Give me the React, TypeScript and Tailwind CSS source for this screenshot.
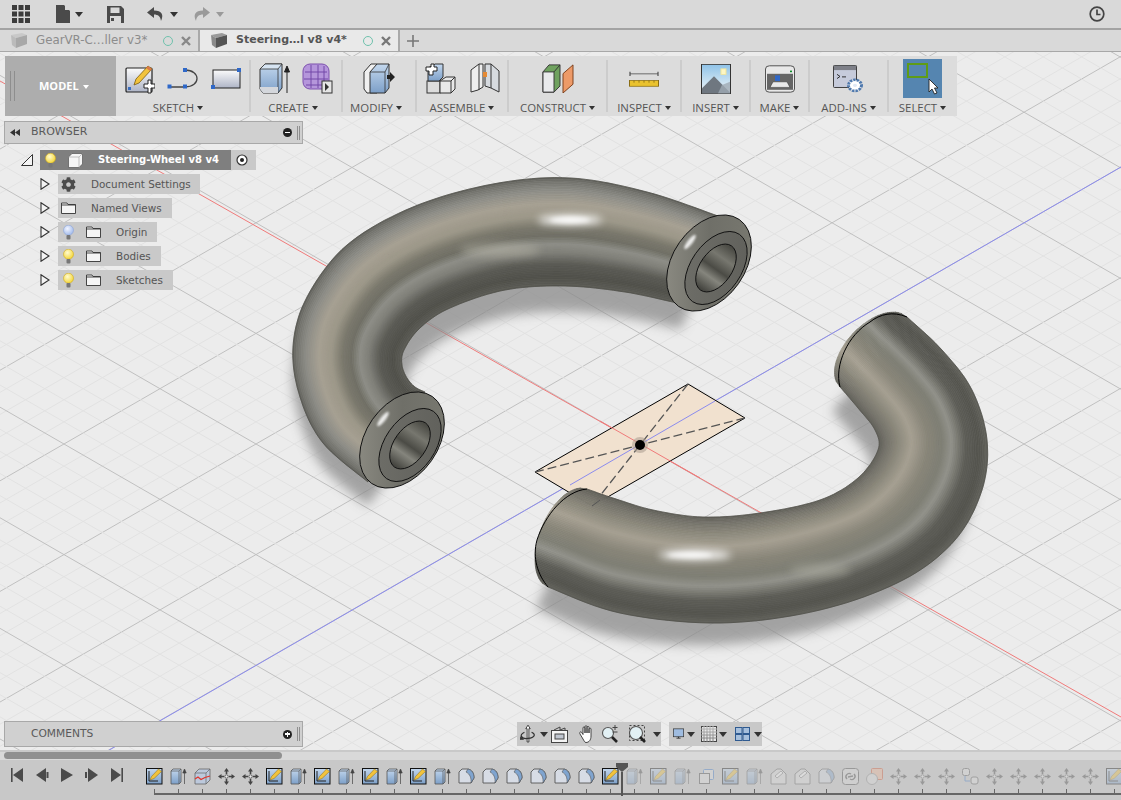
import React from 'react'
import { FaCog } from 'react-icons/fa'

type Pt = [number, number]

const ui = { fontFamily: '"Open Sans", "Noto Sans", sans-serif' }
const tree = { fontFamily: '"DejaVu Sans", "Open Sans", sans-serif' }

// viewport geometry: tube outlines traced from the picture
const smooth = (p: Pt[], n = 10): Pt[] => {
  const out: Pt[] = []
  for (let i = 0; i < p.length - 1; i++) {
    const a = p[Math.max(i - 1, 0)]
    const b = p[i]
    const c = p[i + 1]
    const d = p[Math.min(i + 2, p.length - 1)]
    for (let k = 0; k < n; k++) {
      const t = k / n
      const f = (j: 0 | 1) =>
        0.5 *
        (2 * b[j] +
          (c[j] - a[j]) * t +
          (2 * a[j] - 5 * b[j] + 4 * c[j] - d[j]) * t * t +
          (3 * b[j] - a[j] - 3 * c[j] + d[j]) * t * t * t)
      out.push([f(0), f(1)])
    }
  }
  out.push(p[p.length - 1])
  return out
}

const mix = (stops: number[][], t: number) => {
  let i = 0
  while (i < stops.length - 2 && t > stops[i + 1][0]) i++
  const a = stops[i]
  const b = stops[i + 1]
  const u = Math.min(1, Math.max(0, (t - a[0]) / (b[0] - a[0])))
  const c = [1, 2, 3].map((j) => Math.round(a[j] + (b[j] - a[j]) * u))
  return `rgb(${c[0]},${c[1]},${c[2]})`
}

const rowAt = (o: Pt[], i: Pt[], t: number, b0: Pt, b1: Pt): Pt[] =>
  o.map((p, k) => {
    const q = i[k]
    const e = 2 * Math.sqrt(Math.max(t * (1 - t), 0))
    const bx = k === 0 ? b0[0] * e : k === o.length - 1 ? b1[0] * e : 0
    const by = k === 0 ? b0[1] * e : k === o.length - 1 ? b1[1] * e : 0
    return [p[0] + (q[0] - p[0]) * t + bx, p[1] + (q[1] - p[1]) * t + by]
  })

const toPath = (p: Pt[]) => p.map((q) => q[0].toFixed(1) + ' ' + q[1].toFixed(1)).join(' L')

const Tube = ({ id, outer, inner, stops, b0 = [0, 0], b1 = [0, 0], children }: { id: string; outer: Pt[]; inner: Pt[]; stops: number[][]; b0?: Pt; b1?: Pt; children?: React.ReactNode }) => {
  const o = smooth(outer)
  const i = smooth(inner)
  const K = 64
  const strips = []
  for (let j = 0; j < K; j++) {
    const a = rowAt(o, i, j / K, b0, b1)
    const b = rowAt(o, i, (j + 1) / K, b0, b1)
    const c = mix(stops, (j + 0.5) / K)
    strips.push(<path key={j} d={'M' + toPath(a) + ' L' + toPath([...b].reverse()) + 'Z'} fill={c} stroke={c} strokeWidth="0.7" />)
  }
  const ends = (k: number) => {
    const pts: Pt[] = []
    for (let j = 0; j <= 24; j++) pts.push(rowAt(o, i, j / 24, b0, b1)[k])
    return pts
  }
  const sil = 'M' + toPath(ends(0)) + ' L' + toPath(rowAt(o, i, 1, b0, b1)) + ' L' + toPath([...ends(o.length - 1)].reverse()) + ' L' + toPath([...rowAt(o, i, 0, b0, b1)].reverse()) + 'Z'
  return (
    <g>
      <clipPath id={id}>
        <path d={sil} />
      </clipPath>
      {strips}
      <g clipPath={`url(#${id})`}>{children}</g>
      <path d={'M' + toPath(rowAt(o, i, 0, b0, b1))} fill="none" stroke="#3b3b36" strokeWidth="0.7" strokeOpacity="0.6" />
      <path d={'M' + toPath(rowAt(o, i, 1, b0, b1))} fill="none" stroke="#3b3b36" strokeWidth="0.7" strokeOpacity="0.5" />
    </g>
  )
}

const upperOuter: Pt[] = [[718, 216], [647, 192], [570, 178], [493, 184], [413, 207], [347, 245], [307, 297], [293, 347], [300, 397], [323, 443], [368, 482]]
const upperInner: Pt[] = [[677, 303], [625, 292], [565, 286], [505, 290], [450, 308], [420, 328], [404, 350], [402, 365], [407, 378], [415, 387], [425, 392]]
const lowerOuter: Pt[] = [[548, 587], [620, 613], [720, 623], [820, 610], [903, 580], [955, 540], [982, 490], [987, 440], [972, 390], [942, 350], [907, 317]]
const lowerInner: Pt[] = [[587, 489], [613, 498], [653, 510], [703, 517], [760, 513], [820, 500], [858, 478], [878, 450], [875, 430], [858, 408], [840, 387]]

const upperStops = [
  [0, 96, 96, 91], [0.04, 116, 116, 110], [0.12, 140, 140, 134], [0.24, 166, 160, 146], [0.36, 156, 151, 136], [0.46, 122, 120, 108],
  [0.54, 112, 111, 101], [0.62, 142, 142, 135], [0.7, 126, 126, 119], [0.8, 90, 90, 84], [0.92, 80, 80, 74], [1, 92, 92, 86],
]
const lowerStops = [
  [0, 98, 98, 92], [0.08, 84, 84, 78], [0.2, 92, 92, 86], [0.33, 146, 146, 138], [0.42, 126, 126, 116], [0.55, 136, 133, 120],
  [0.7, 166, 160, 146], [0.82, 140, 137, 124], [0.94, 116, 114, 105], [1, 98, 97, 90],
]

const Cap = ({ cx, cy, mx, my }: { cx: number; cy: number; mx: number; my: number }) => (
  <g>
    <ellipse cx={cx} cy={cy} rx="53" ry="36" transform={`rotate(-55 ${cx} ${cy})`} fill="url(#capOuter)" stroke="#111" strokeWidth="0.9" />
    <ellipse cx={cx - 19} cy={cy - 21} rx="2.5" ry="9" transform={`rotate(38 ${cx - 19} ${cy - 21})`} fill="#fff" opacity="0.85" filter="url(#blur1)" />
    <ellipse cx={mx} cy={my} rx="41" ry="25" transform={`rotate(-55 ${mx} ${my})`} fill="url(#capRing)" stroke="#111" strokeWidth="0.9" />
    <ellipse cx={mx} cy={my} rx="27" ry="16" transform={`rotate(-55 ${mx} ${my})`} fill="url(#capHole)" stroke="#111" strokeWidth="0.9" />
  </g>
)

const gridLines = () => {
  const lines = []
  const k = 0.576
  for (const dir of [-1, 1]) {
    for (let n = -70; n <= 70; n++) {
      const major = Math.abs(n) % 5 === 0
      const y0 = 444 + dir * k * (0 - 640) + n * 22.12
      const y1 = 444 + dir * k * (1121 - 640) + n * 22.12
      lines.push(<line key={dir + '_' + n} x1="0" y1={y0} x2="1121" y2={y1} stroke={major ? '#c0c0c0' : '#e2e2e2'} strokeWidth="1" />)
    }
  }
  return lines
}

const Viewport = () => (
  <svg className="absolute inset-0" width="1121" height="698" viewBox="0 52 1121 698">
    <defs>
      <filter id="blur5" x="-20%" y="-20%" width="140%" height="140%"><feGaussianBlur stdDeviation="6" /></filter>
      <filter id="blur2" x="-100%" y="-100%" width="300%" height="300%"><feGaussianBlur stdDeviation="2" /></filter>
      <filter id="blur1" x="-200%" y="-100%" width="500%" height="300%"><feGaussianBlur stdDeviation="1.1" /></filter>
      <filter id="blur4" x="-100%" y="-100%" width="300%" height="300%"><feGaussianBlur stdDeviation="4" /></filter>
      <linearGradient id="capOuter" x1="0" y1="0" x2="1" y2="1">
        <stop offset="0" stopColor="#94938a" />
        <stop offset="0.5" stopColor="#6f6f68" />
        <stop offset="1" stopColor="#7b7b72" />
      </linearGradient>
      <linearGradient id="capRing" x1="0" y1="0" x2="1" y2="1">
        <stop offset="0" stopColor="#6f6f69" />
        <stop offset="1" stopColor="#5f5f5a" />
      </linearGradient>
      <linearGradient id="capHole" x1="0" y1="0" x2="1" y2="0">
        <stop offset="0" stopColor="#3f3f3a" />
        <stop offset="0.3" stopColor="#85857d" />
        <stop offset="0.48" stopColor="#4b4b45" />
        <stop offset="0.72" stopColor="#77776f" />
        <stop offset="1" stopColor="#45453f" />
      </linearGradient>
      <linearGradient id="tbBlue" x1="0" y1="0" x2="0" y2="1">
        <stop offset="0" stopColor="#c4d8ee" />
        <stop offset="1" stopColor="#7c9fc8" />
      </linearGradient>
      <linearGradient id="tbPaper" x1="0" y1="0" x2="0" y2="1">
        <stop offset="0" stopColor="#fbfbfb" />
        <stop offset="1" stopColor="#aeb4c6" />
      </linearGradient>
      <linearGradient id="tbSky" x1="0" y1="0" x2="0" y2="1">
        <stop offset="0" stopColor="#8fc3e8" />
        <stop offset="1" stopColor="#f2f6f8" />
      </linearGradient>
      <radialGradient id="tbBulb" cx="0.4" cy="0.35" r="0.7">
        <stop offset="0" stopColor="#fffbd0" />
        <stop offset="1" stopColor="#f3d431" />
      </radialGradient>
      <radialGradient id="tbBulbBlue" cx="0.4" cy="0.35" r="0.7">
        <stop offset="0" stopColor="#f2f5ff" />
        <stop offset="1" stopColor="#9db7ea" />
      </radialGradient>
    </defs>
    <rect x="0" y="52" width="1121" height="698" fill="#ececec" />
    {gridLines()}
    <line x1="0" y1="81" x2="1121" y2="717" stroke="#f07a7a" strokeWidth="1" />
    <line x1="0" y1="813" x2="1121" y2="167" stroke="#8b8bee" strokeWidth="1" />
    <path d="M688 384 L745 418 L592 506 L535 472Z" fill="#f1e1cf" stroke="#000" strokeWidth="1" />
    <line x1="600" y1="421" x2="700" y2="478" stroke="#f07a7a" strokeWidth="1" />
    <line x1="570" y1="485" x2="715" y2="401" stroke="#8b8bee" strokeWidth="1" />
    <path d="M688 384 L592 506 M535 472 L745 418" fill="none" stroke="#555" strokeWidth="1.3" strokeDasharray="9 4" />
    <circle cx="640" cy="445" r="8" fill="#a89b8e" opacity="0.55" />
    <circle cx="640" cy="445" r="5" fill="#000" />
    <g filter="url(#blur5)" fill="#8a8a8a" opacity="0.75">
      <path d={'M' + toPath([...smooth(upperOuter).map((p) => [p[0], p[1] + 24] as Pt), ...smooth(upperInner).reverse().map((p) => [p[0] + 4, p[1] + 26] as Pt)]) + 'Z'} />
      <path d={'M' + toPath([...smooth(lowerOuter).map((p) => [p[0] - 12, p[1] + 22] as Pt), ...smooth(lowerInner).reverse().map((p) => [p[0] - 8, p[1] + 24] as Pt)]) + 'Z'} />
    </g>
    <Tube id="upperClip" outer={upperOuter} inner={upperInner} stops={upperStops}>
      <ellipse cx="570" cy="220" rx="32" ry="5" fill="#fff" opacity="0.95" filter="url(#blur4)" />
      <ellipse cx="570" cy="220" rx="20" ry="3" fill="#fff" opacity="0.8" filter="url(#blur2)" />
      <ellipse cx="500" cy="250" rx="40" ry="7" fill="#b5b3a6" opacity="0.55" filter="url(#blur4)" />
    </Tube>
    <Cap cx={709} cy={263} mx={716} my={268} />
    <Cap cx={402} cy={440} mx={410} my={445} />
    <Tube id="lowerClip" outer={lowerOuter} inner={lowerInner} stops={lowerStops} b0={[-26, -10]} b1={[-20, -19]}>
      <ellipse cx="695" cy="555" rx="36" ry="5" fill="#fff" opacity="0.95" filter="url(#blur4)" />
      <ellipse cx="690" cy="555" rx="22" ry="2.5" fill="#fff" opacity="0.8" filter="url(#blur2)" />
      <ellipse cx="820" cy="570" rx="30" ry="7" fill="#a8a89c" opacity="0.5" filter="url(#blur4)" />
    </Tube>
    <path d="M548 587 C538 575 532 558 537 540 C545 515 565 491 587 489" fill="none" stroke="#000" strokeWidth="1" />
    <path d="M840 387 C834 365 848 335 870 322 C880 314 893 311 907 317" fill="none" stroke="#000" strokeWidth="1" />
    <path d="M592 506 L600 500" stroke="#555" strokeWidth="1" />
  </svg>
)

// small glyphs
const Caret = ({ className = 'fill-[#333]' }: { className?: string }) => (
  <svg width="8" height="5" viewBox="0 0 8 5" preserveAspectRatio="none" className={'shrink-0 ' + className}><path d="M0 0 H8 L4 5Z" /></svg>
)

const TopBar = () => (
  <div className="flex h-[28px] shrink-0 items-center bg-[#d9d9d9] pl-[12px] pr-[16px]">
    <svg width="18" height="18" viewBox="0 0 18 18" className="fill-[#3c3c3c]">
      {[0, 6.5, 13].map((x) => [0, 6.5, 13].map((y) => <rect key={x + '-' + y} x={x} y={y} width="5" height="5" />))}
    </svg>
    <svg width="14" height="18" viewBox="0 0 14 18" className="ml-[26px] fill-[#4a4a4a]"><path d="M0 0 H8 L14 6 V18 H0Z" /><path d="M9 0 L14 5 H9Z" fill="#d9d9d9" /></svg>
    <Caret className="ml-[5px] mr-[0px] fill-[#333]" />
    <svg width="17" height="17" viewBox="0 0 17 17" className="ml-[24px] fill-[#4a4a4a]"><path d="M0 0 H14 L17 3 V17 H0Z" /><rect x="3.5" y="1.5" width="9" height="5.5" fill="#d9d9d9" /><rect x="3" y="10" width="11" height="7" fill="#d9d9d9" /><rect x="4" y="12" width="3" height="3" /></svg>
    <svg width="17" height="14" viewBox="0 0 17 14" className="ml-[23px] fill-[#4a4a4a]"><path d="M7 0 L0 5.5 L7 11 V7.5 C11 7.5 13.5 9.5 14 14 C17 8 15 3.5 7 3.5Z" /></svg>
    <Caret className="ml-[6px] fill-[#333]" />
    <svg width="17" height="14" viewBox="0 0 17 14" className="ml-[15px] fill-[#9a9a9a]"><path d="M10 0 L17 5.5 L10 11 V7.5 C6 7.5 3.5 9.5 3 14 C0 8 2 3.5 10 3.5Z" /></svg>
    <Caret className="ml-[6px] fill-[#9a9a9a]" />
    <div className="flex-1" />
    <svg width="16" height="16" viewBox="0 0 16 16" fill="none" stroke="#444" strokeWidth="1.7"><circle cx="8" cy="8" r="6.8" /><path d="M8 3.5 V8.5 H11.5" /></svg>
  </div>
)

const TabCube = ({ dark }: { dark?: boolean }) => (
  <svg width="16" height="15" viewBox="0 0 16 15">
    <path d="M0 2 L11 0 L16 2 L5 5Z" fill={dark ? '#9a9a9a' : '#c8c8c8'} />
    <path d="M0 2 L5 5 V15 L1 12Z" fill={dark ? '#8a8a8a' : '#bbb'} />
    <path d="M5 5 L16 2 V11 L5 15Z" fill={dark ? '#555' : '#a8a8a8'} />
  </svg>
)

const Tab = ({ label, active }: { label: string; active?: boolean }) => (
  <div className={'flex h-full w-[200px] items-center border-r-2 border-[#a9a9a9] ' + (active ? 'bg-[#e9e9e9] font-semibold text-[#555]' : 'bg-[#d9d9d9] text-[#8c8c8c]')}>
    <div className="ml-[11px] w-[25px]"><TabCube dark={active} /></div>
    <span className={(active ? 'text-[11px]' : 'text-[11.8px]') + ' whitespace-nowrap'} style={tree}>{label}</span>
    <div className="flex-1" />
    <div className="mr-[8px] h-[10px] w-[10px] rounded-full border-[1.5px] border-[#6fc2ad]" />
    <svg width="10" height="10" viewBox="0 0 10 10" className="mr-[7px]" stroke={active ? '#777' : '#888'} strokeWidth="2.4"><path d="M1 1 L9 9 M9 1 L1 9" /></svg>
  </div>
)

const TabBar = () => (
  <div className="box-content flex h-[21px] shrink-0 border-t-2 border-b border-t-[#a3a3a3] border-b-[#a8a8a8] bg-[#d9d9d9]">
    <Tab label="GearVR-C…ller v3*" />
    <Tab label="Steering…l v8 v4*" active />
    <svg width="12" height="12" viewBox="0 0 12 12" className="ml-[7px] mt-[5px]" stroke="#777" strokeWidth="1.6"><path d="M6 0 V12 M0 6 H12" /></svg>
  </div>
)

// toolbar icons
const IcSketch = () => (
  <svg width="30" height="30" viewBox="0 0 30 30">
    <rect x="1" y="4" width="26" height="24" rx="1" fill="url(#tbPaper)" stroke="#222" strokeWidth="1.2" />
    <rect x="3" y="23" width="3" height="3" fill="#3a6fc0" />
    <path d="M9 21 L11 15 L23 2 L27 5 L14 19Z" fill="#f2c33c" stroke="#7a5b10" strokeWidth="0.8" />
    <path d="M23 2 L27 5 L25 7 L21 4Z" fill="#d97a4a" />
    <path d="M19 20 H23 V16 H26 V20 H30 V24 H26 V29 H23 V24 H19Z" fill="#fff" stroke="#222" strokeWidth="1" />
  </svg>
)
const IcLine = () => (
  <svg width="32" height="22" viewBox="0 0 32 22">
    <path d="M3 19 H18 M18 2 C34 2 34 19 18 19" fill="none" stroke="#444" strokeWidth="1.3" />
    <rect x="0.5" y="16.5" width="4" height="4" fill="#2f68c8" />
    <rect x="16" y="16.5" width="4" height="4" fill="#2f68c8" />
    <rect x="16" y="0" width="4" height="4" fill="#2f68c8" />
  </svg>
)
const IcRect = () => (
  <svg width="31" height="22" viewBox="0 0 31 22">
    <rect x="2" y="2" width="27" height="18" fill="url(#tbPaper)" stroke="#222" strokeWidth="1" />
    <rect x="26" y="0" width="4" height="4" fill="#2f68c8" />
    <rect x="0" y="17" width="4" height="4" fill="#2f68c8" />
  </svg>
)
const IcExtrude = () => (
  <svg width="32" height="31" viewBox="0 0 32 31">
    <path d="M1 6 L6 1 H23 V25 L19 30 H4 L1 26Z" fill="url(#tbBlue)" stroke="#333" strokeWidth="1" strokeLinejoin="round" />
    <path d="M1 6 H19 L23 1 H6Z" fill="#d6e4f2" stroke="#333" strokeWidth="0.8" />
    <path d="M19 6 V30" stroke="#333" strokeWidth="0.8" />
    <path d="M1 24 H19 V30 H4 L1 26Z" fill="#d4d7dc" />
    <path d="M28 30 V6 M25.5 9 L28 3 L30.5 9Z" stroke="#222" fill="#222" strokeWidth="1" />
  </svg>
)
const IcForm = () => (
  <svg width="31" height="31" viewBox="0 0 31 31">
    <rect x="1" y="1" width="26" height="25" rx="7" fill="#b596db" stroke="#7c50ad" strokeWidth="1" />
    <path d="M3 9 H25 M2 16 H26 M4 22 H24 M9 2 V25 M16 2 V25 M22 3 V25" stroke="#7349a8" strokeWidth="1" fill="none" />
    <rect x="20" y="18" width="10" height="12" fill="#e5e5e5" stroke="#333" />
    <path d="M23 20 L27 24 L23 28Z" fill="#333" />
  </svg>
)
const IcModify = () => (
  <svg width="32" height="31" viewBox="0 0 32 31">
    <path d="M1 9 L8 1 H14 V30 H4 L1 26Z" fill="#f0f0f0" stroke="#333" strokeWidth="1" />
    <path d="M7 9 L14 1 H26 V25 L22 30 H7Z" fill="url(#tbBlue)" stroke="#333" strokeWidth="1" />
    <path d="M22 9 H7 M22 9 V30 M22 9 L26 1" stroke="#333" strokeWidth="0.8" fill="none" />
    <path d="M24 12 H27 V9 L32 14 L27 19 V16 H24Z" fill="#222" />
  </svg>
)
const IcAssemble = () => (
  <svg width="31" height="31" viewBox="0 0 31 31">
    <rect x="2" y="18" width="13" height="12" fill="#dcdcdc" stroke="#333" />
    <path d="M15 18 L21 14 H30 V26 L26 30 H15Z" fill="#e8e8e8" stroke="#333" />
    <path d="M15 18 H26 V30 M26 18 L30 14" fill="none" stroke="#333" />
    <path d="M3 16 V5 L10 1 H18 V14 L14 18 H3Z" fill="url(#tbBlue)" stroke="#333" />
    <path d="M5 3 H10 V0 H13 V3 H16 V7 H12 V11 H8 V7 H5Z" fill="#fff" stroke="#222" transform="translate(-4 1)" />
  </svg>
)
const IcJoint = () => (
  <svg width="30" height="31" viewBox="0 0 30 31">
    <path d="M1 7 L9 1 H13 V24 L8 27 L1 29Z" fill="#eee" stroke="#333" />
    <path d="M15 1 H21 L29 8 V29 L21 25 L15 23Z" fill="#d6dadf" stroke="#333" />
    <path d="M9 1 V27 M21 1 V25" stroke="#333" fill="none" />
    <path d="M13 14 H17 V9 H13Z" fill="#e58a35" />
  </svg>
)
const IcConstruct = () => (
  <svg width="32" height="29" viewBox="0 0 32 33" preserveAspectRatio="none">
    <path d="M1 9 L7 1 H18 V25 L12 32 H1Z" fill="#6fa25f" stroke="#333" />
    <path d="M1 9 H12 V32 H1Z" fill="#e9eaec" stroke="#333" />
    <path d="M12 9 L18 1" stroke="#333" />
    <path d="M21 11 L31 1 V23 L21 33Z" fill="#ed9a68" stroke="#7a3c18" />
  </svg>
)
const IcInspect = () => (
  <svg width="30" height="16" viewBox="0 0 30 22" preserveAspectRatio="none">
    <path d="M1 1 V7 M29 1 V7 M1 4 H29" stroke="#444" strokeWidth="1.1" fill="none" />
    <rect x="0.5" y="13" width="29" height="8" fill="#eac22e" stroke="#8a6d14" />
    <path d="M5 13 V16 M10 13 V16 M15 13 V16 M20 13 V16 M25 13 V16" stroke="#8a6d14" />
  </svg>
)
const IcInsert = () => (
  <svg width="30" height="30" viewBox="0 0 30 37" preserveAspectRatio="none">
    <rect x="0.5" y="0.5" width="29" height="36" fill="url(#tbSky)" stroke="#333" />
    <rect x="20" y="6" width="5" height="7" fill="#fdf6c4" stroke="#f0e59a" />
    <path d="M1 36 V30 L13 15 L29 35 V36Z" fill="#6f7780" />
    <path d="M17 36 L21 26 L29 22 V36Z" fill="#9fa9b3" opacity="0.8" />
  </svg>
)
const IcMake = () => (
  <svg width="30" height="28" viewBox="0 0 30 35" preserveAspectRatio="none">
    <rect x="0.5" y="1" width="29" height="33" rx="4" fill="#e8e8e8" stroke="#444" />
    <rect x="2" y="11" width="26" height="20" fill="#666" />
    <rect x="10" y="13" width="5" height="7" fill="#2f68c8" />
    <path d="M5 28 L8 21 H22 L25 28Z" fill="#e9e9e9" stroke="#333" strokeWidth="0.6" />
    <rect x="25" y="7" width="2" height="2" fill="#0a8a28" />
  </svg>
)
const IcAddIn = () => (
  <svg width="31" height="28" viewBox="0 0 31 33" preserveAspectRatio="none">
    <rect x="0.5" y="0.5" width="23" height="26" rx="1" fill="#c6cbdb" stroke="#333" />
    <rect x="1" y="1" width="22" height="5" fill="#7e8088" />
    <path d="M4 11 L7 13.5 L4 16 M9 14 H13" fill="none" stroke="#222" />
    <circle cx="22" cy="24" r="6.5" fill="#fff" stroke="#4e78ad" strokeWidth="3" strokeDasharray="2.5 1" />
    <circle cx="22" cy="24" r="2" fill="#dfe8f5" />
  </svg>
)
const IcSelect = () => (
  <div className="relative h-[39px] w-[39px] bg-[#5585b0]">
    <div className="ml-[4px] mt-[4px] h-[15px] w-[21px] border-2 border-[#5f9c16]" />
    <svg width="11" height="17" viewBox="0 0 11 17" className="absolute left-[25px] top-[19px]"><path d="M1 1 V14 L4 11 L6.5 16 L9 15 L6.5 10 L10 10Z" fill="#fff" stroke="#222" strokeWidth="0.9" /></svg>
  </div>
)

const ToolGroup = ({ label, w, gap = 0, children, last, shift = '' }: { label: string; w: number; gap?: number; children: React.ReactNode; last?: boolean; shift?: string }) => (
  <div className="relative flex h-full flex-col items-center" style={{ width: w }}>
    <div className="flex h-[45px] w-full items-center justify-center" style={{ gap }}>{children}</div>
    <div className={'flex h-[14px] items-center gap-[3px] text-[#555] ' + shift}>
      <span className="text-[11.4px] leading-none whitespace-nowrap" style={ui}>{label}</span>
      <Caret className="h-[4px] w-[6px] fill-[#333]" />
    </div>
    {!last && <div className="absolute right-[-1px] top-[4px] h-[52px] w-[2px] bg-[#cccccc]" />}
  </div>
)

const Toolbar = () => (
  <div className="absolute left-[5px] top-[4px] flex h-[60px] w-[952px] bg-[#dcdcdc]">
    <div className="flex h-full w-[111px] items-center bg-[#adadad]">
      <div className="ml-[5px] h-[30px] w-[5px] border-x border-[#8e8e8e]" />
      <div className="ml-[24px] mt-[1px] flex items-center gap-[4px]">
        <span className="text-[11px] font-bold text-white" style={ui}>MODEL</span>
        <Caret className="h-[4px] w-[6px] fill-white" />
      </div>
    </div>
    <ToolGroup label="SKETCH" w={134} gap={12} shift="mr-[10px]"><IcSketch /><IcLine /><IcRect /></ToolGroup>
    <ToolGroup label="CREATE" w={92} gap={11} shift="mr-[6px]"><IcExtrude /><IcForm /></ToolGroup>
    <ToolGroup label="MODIFY" w={74} shift="mr-[6px]"><IcModify /></ToolGroup>
    <ToolGroup label="ASSEMBLE" w={92} gap={14}><IcAssemble /><IcJoint /></ToolGroup>
    <ToolGroup label="CONSTRUCT" w={99}><IcConstruct /></ToolGroup>
    <ToolGroup label="INSPECT" w={74}><IcInspect /></ToolGroup>
    <ToolGroup label="INSERT" w={69}><IcInsert /></ToolGroup>
    <ToolGroup label="MAKE" w={59}><IcMake /></ToolGroup>
    <ToolGroup label="ADD-INS" w={79}><IcAddIn /></ToolGroup>
    <ToolGroup label="SELECT" w={69} last><IcSelect /></ToolGroup>
  </div>
)

// browser tree
const Bulb = ({ blue }: { blue?: boolean }) => (
  <svg width="11" height="15" viewBox="0 0 11 15">
    <circle cx="5.5" cy="5.2" r="5" fill={blue ? 'url(#tbBulbBlue)' : 'url(#tbBulb)'} stroke={blue ? '#8ea6d6' : '#d0ab20'} strokeWidth="0.6" />
    <rect x="3.5" y="10" width="4" height="4.5" rx="1" fill="#777" />
  </svg>
)
const Folder = () => (
  <svg width="15" height="12" viewBox="0 0 15 12"><path d="M0.5 1 H6 L7 2.5 H14.5 V11.5 H0.5Z M0.5 3 H14.5" fill="#f5f5f5" stroke="#333" strokeWidth="0.9" /></svg>
)
const Expand = () => (
  <svg width="10" height="12" viewBox="0 0 10 12" className="shrink-0"><path d="M1 0.7 L9 6 L1 11.3Z" fill="#f4f4f4" stroke="#333" strokeWidth="1.1" /></svg>
)

const TreeRow = ({ label, width, bulb, blue, gear, textLeft }: { label: string; width: number; bulb?: boolean; blue?: boolean; gear?: boolean; textLeft: number }) => (
  <div className="flex h-[20px] items-center">
    <Expand />
    <div className="relative ml-[8px] flex h-full items-center bg-[#c9c9c9]" style={{ width }}>
      {bulb && <div className="ml-[5px]"><Bulb blue={blue} /></div>}
      {gear && <FaCog className="ml-[3px] text-[15px] text-[#4c4c4c]" />}
      {!gear && <div className={bulb ? 'ml-[12px]' : 'ml-[3px]'}><Folder /></div>}
      <span className="absolute top-[3px] text-[10.4px] leading-[14px] whitespace-nowrap text-[#555]" style={{ ...tree, left: textLeft }}>{label}</span>
    </div>
  </div>
)

const Grip = () => <div className="h-[14px] w-[3px] border-x border-[#8f8f8f]" />

const Browser = () => (
  <div className="absolute left-[4px] top-[69px] w-[299px]">
    <div className="flex h-[23px] items-center border border-[#a8a8a8] bg-[#d0d0d0] pr-[2px]">
      <svg width="10" height="7" viewBox="0 0 10 7" className="ml-[5px] fill-[#333]"><path d="M5 0 V7 L0 3.5Z M10 0 V7 L5 3.5Z" /></svg>
      <span className="ml-[11px] text-[11px] text-[#5a5a5a]" style={tree}>BROWSER</span>
      <div className="flex-1" />
      <div className="mr-[5px] flex h-[9px] w-[9px] items-center justify-center rounded-full bg-[#222]"><div className="h-[1.5px] w-[5px] bg-white" /></div>
      <Grip />
    </div>
    <div className="ml-[17px] mt-[6px] flex h-[20px] items-center">
      <svg width="12" height="12" viewBox="0 0 12 12"><path d="M0.5 11.5 H11.5 V0.5Z" fill="#f4f4f4" stroke="#333" /></svg>
      <div className="ml-[7px] flex h-full w-[216px] items-center bg-[#c9c9c9]">
        <div className="relative flex h-full w-[191px] items-center bg-[#7f7f7f]">
          <div className="ml-[5px]"><Bulb /></div>
          <svg width="15" height="15" viewBox="0 0 15 15" className="ml-[12px]"><path d="M0.5 4 L4 0.5 H14.5 V11 L11 14.5 H0.5Z" fill="#f5f5f5" stroke="#555" strokeWidth="0.7" /><path d="M0.5 4 H11 V14.5 M11 4 L14.5 0.5" fill="none" stroke="#aaa" strokeWidth="0.7" /></svg>
          <span className="absolute left-[58px] top-[3px] text-[10px] font-bold leading-[14px] whitespace-nowrap text-white" style={tree}>Steering-Wheel v8 v4</span>
        </div>
        <svg width="12" height="12" viewBox="0 0 12 12" className="ml-[5px]"><circle cx="6" cy="6" r="5" fill="#fff" stroke="#333" strokeWidth="1.2" /><circle cx="6" cy="6" r="2" fill="#222" /></svg>
      </div>
    </div>
    <div className="ml-[36px] mt-[4px] flex flex-col gap-[4px]">
      <TreeRow label="Document Settings" width={142} gear textLeft={33} />
      <TreeRow label="Named Views" width={114} textLeft={33} />
      <TreeRow label="Origin" width={99} bulb blue textLeft={58} />
      <TreeRow label="Bodies" width={103} bulb textLeft={58} />
      <TreeRow label="Sketches" width={115} bulb textLeft={58} />
    </div>
  </div>
)

const Comments = () => (
  <div className="absolute bottom-[3px] left-[4px] flex h-[26px] w-[299px] items-center border border-[#a8a8a8] bg-[#d0d0d0] pr-[2px]">
    <span className="ml-[26px] text-[10.7px] text-[#5a5a5a]" style={tree}>COMMENTS</span>
    <div className="flex-1" />
    <div className="relative mr-[5px] flex h-[9px] w-[9px] items-center justify-center rounded-full bg-[#222]">
      <div className="h-[1.5px] w-[5px] bg-white" />
      <div className="absolute h-[5px] w-[1.5px] bg-white" />
    </div>
    <Grip />
  </div>
)

// viewport navigation bar
const IcOrbit = () => (
  <svg width="18" height="20" viewBox="0 0 18 20" fill="none" stroke="#333"><path d="M9 0 L11.5 4 H10 V19 H8 V4 H6.5Z" fill="#fff" /><path d="M5 8 C-2 11 2 16 9 15 C17 14 18 10 13 8" strokeWidth="1.4" /><path d="M1 13 L4 16 L0 16Z" fill="#333" /></svg>
)
const IcCamera = () => (
  <svg width="17" height="17" viewBox="0 0 17 17" fill="none" stroke="#444"><path d="M3 4 L9 1 L9 4 L14 2 V4" /><rect x="0.5" y="4.5" width="16" height="12" fill="#f4f4f4" /><rect x="4" y="8" width="9" height="5" fill="#c0c6d0" /></svg>
)
const IcHand = () => (
  <svg width="17" height="18" viewBox="0 0 17 18" fill="#fff" stroke="#333" strokeWidth="0.9"><path d="M4 14 L1 9 C0 7 2 6 3 8 L4 9.5 V3 C4 1.5 6 1.5 6 3 V8 V1.8 C6 0.3 8 0.3 8 1.8 V8 V2.5 C8 1 10 1 10 2.5 V8 V4 C10 2.8 12 2.8 12 4 V11 C12 15 10 17.5 7 17.5 C5.5 17.5 5 15.5 4 14Z" transform="translate(2 0)" /></svg>
)
const IcZoom = ({ pm }: { pm?: boolean }) => (
  <svg width="18" height="18" viewBox="0 0 18 18" fill="none">
    {!pm && <rect x="0.5" y="0.5" width="15" height="15" stroke="#444" strokeDasharray="2 2" />}
    <circle cx="7" cy="8" r={pm ? 5.5 : 6.5} fill="#e2f0f4" stroke="#555" strokeWidth="1.1" />
    <path d="M11 12 L16 17" stroke="#222" strokeWidth="2.6" />
    {pm && <path d="M14 0 V5 M11.5 2.5 H16.5 M11.5 7 H16.5" stroke="#444" strokeWidth="1" />}
  </svg>
)
const IcMonitor = () => (
  <svg width="16" height="16" viewBox="0 0 16 16"><rect x="0.5" y="0.5" width="15" height="11.5" fill="#9fbce0" stroke="#333" /><path d="M5 14 H11 M8 12 V14" stroke="#333" strokeWidth="1.4" /></svg>
)
const IcGrid = () => (
  <svg width="16" height="16" viewBox="0 0 16 16"><defs><linearGradient id="navGrid" gradientUnits="userSpaceOnUse" x1="0" y1="0" x2="0" y2="16"><stop offset="0" stopColor="#bbb" /><stop offset="1" stopColor="#777" /></linearGradient></defs><rect x="0.5" y="0.5" width="15" height="15" fill="#e8e8e8" stroke="#444" /><path d="M3 0 V16 M6 0 V16 M9 0 V16 M12 0 V16 M0 3 H16 M0 6 H16 M0 9 H16 M0 12 H16" stroke="url(#navGrid)" /></svg>
)
const IcPanes = () => (
  <svg width="15" height="14" viewBox="0 0 15 14" fill="#a6bfdc" stroke="#2f5a90"><rect x="0.5" y="0.5" width="6.5" height="6" /><rect x="8" y="0.5" width="6.5" height="6" /><rect x="0.5" y="7.5" width="6.5" height="6" /><rect x="8" y="7.5" width="6.5" height="6" /></svg>
)

const NavBar = () => (
  <div className="absolute left-[517px] top-[670px] flex h-[24px] gap-[8px]">
    <div className="flex h-full w-[144px] items-center bg-[#c8c8c8] pl-[3px]">
      <IcOrbit />
      <Caret className="ml-[4px] fill-[#333]" />
      <div className="ml-[3px]"><IcCamera /></div>
      <div className="ml-[9px]"><IcHand /></div>
      <div className="ml-[7px]"><IcZoom pm /></div>
      <div className="ml-[10px]"><IcZoom /></div>
      <Caret className="ml-[6px] fill-[#333]" />
    </div>
    <div className="flex h-full w-[93px] items-center bg-[#c8c8c8] pl-[4px]">
      <IcMonitor />
      <Caret className="ml-[3px] fill-[#333]" />
      <div className="ml-[6px]"><IcGrid /></div>
      <Caret className="ml-[2px] fill-[#333]" />
      <div className="ml-[8px]"><IcPanes /></div>
      <Caret className="ml-[4px] fill-[#333]" />
    </div>
  </div>
)

// timeline
const TlSketch = () => (
  <svg width="17" height="17" viewBox="0 0 17 17">
    <rect x="0.5" y="0.5" width="15.5" height="15.5" fill="url(#tbBlue)" stroke="#111" />
    <path d="M3 3 V13 H12" fill="none" stroke="#222" strokeWidth="1" />
    <path d="M4 12 L5.5 8.5 L12.5 1 L15.5 3.5 L8 10.5Z" fill="#f2c33c" stroke="#8a6a12" strokeWidth="0.5" />
  </svg>
)
const TlExtrude = () => (
  <svg width="17" height="17" viewBox="0 0 17 17">
    <path d="M1 3 L3 1 H11 V14 L9 16 H1Z" fill="url(#tbBlue)" stroke="#555" strokeWidth="0.8" />
    <path d="M9 3 V16 M1 3 H9 L11 1" fill="none" stroke="#555" strokeWidth="0.7" />
    <path d="M14.5 16 V3 M12.8 5 L14.5 1 L16.2 5Z" stroke="#444" fill="#444" strokeWidth="0.7" />
  </svg>
)
const TlForm = () => (
  <svg width="17" height="17" viewBox="0 0 17 17">
    <path d="M1 5 L5 1 H16 V12 L12 16 H1Z" fill="#bcc9dc" stroke="#666" strokeWidth="0.8" />
    <path d="M1 5 H12 V16 M12 5 L16 1" fill="none" stroke="#666" strokeWidth="0.7" />
    <path d="M1 11 L4 9 L7 11.5 L11 9.5 L16 8" fill="none" stroke="#e0352b" strokeWidth="1.2" />
  </svg>
)
const TlMove = () => (
  <svg width="17" height="17" viewBox="0 0 17 17" fill="#444">
    <circle cx="8.5" cy="8.5" r="1.7" fill="#eee" stroke="#444" strokeWidth="0.8" />
    <path d="M8.5 0 L11 3.5 H9.3 V6 H7.7 V3.5 H6Z M8.5 17 L11 13.5 H9.3 V11 H7.7 V13.5 H6Z M0 8.5 L3.5 6 V7.7 H6 V9.3 H3.5 V11Z M17 8.5 L13.5 6 V7.7 H11 V9.3 H13.5 V11Z" />
  </svg>
)
const TlFillet = () => (
  <svg width="17" height="17" viewBox="0 0 17 17">
    <path d="M1 4 L4 1 H10 C14 2 16 5 16 10 L13 15 H1Z" fill="#d7dce5" stroke="#555" strokeWidth="0.9" />
    <path d="M10 1 C14 2 16 5 16 10 L13 15 C13.5 10 12 6 8 4Z" fill="#7fa4cf" stroke="#555" strokeWidth="0.6" />
  </svg>
)
const TlChamfer = () => (
  <svg width="17" height="17" viewBox="0 0 17 17">
    <path d="M1 6 L7 1 H11 L16 6 V16 H1Z" fill="#e0e0e0" stroke="#555" strokeWidth="0.9" />
    <path d="M5 8 L11 3 L13 5 L7 10Z" fill="#fff" stroke="#555" strokeWidth="0.7" />
  </svg>
)
const TlCombine = () => (
  <svg width="17" height="17" viewBox="0 0 17 17" fill="#e3e3e3" stroke="#3a78c8"><rect x="5.5" y="1.5" width="10" height="10" rx="1" /><rect x="1.5" y="5.5" width="10" height="10" stroke="#444" /></svg>
)
const TlLink = () => (
  <svg width="17" height="17" viewBox="0 0 17 17" fill="none" stroke="#444"><rect x="0.5" y="0.5" width="16" height="16" rx="3" fill="#ddd" /><path d="M5 11 C2 8 6 4 9 6 M12 6 C15 9 11 13 8 11 M6 9 L11 8" strokeWidth="1.4" /></svg>
)
const TlOrange = () => (
  <svg width="17" height="17" viewBox="0 0 17 17" stroke="#d2522c" fill="#f3b79a"><rect x="5.5" y="0.5" width="11" height="11" rx="1" /><circle cx="6" cy="11" r="5.5" fill="#dfdfdf" stroke="#888" /></svg>
)
const TlAlign = () => (
  <svg width="17" height="17" viewBox="0 0 17 17" fill="#e2e2e2" stroke="#555"><rect x="0.5" y="0.5" width="7" height="7" rx="2" /><rect x="9" y="9" width="7" height="7" rx="2" /><path d="M3 8 V13 H8" fill="none" stroke="#3a78c8" /></svg>
)

const tl: React.FC[] = [
  TlSketch, TlExtrude, TlForm, TlMove, TlMove, TlSketch, TlExtrude, TlSketch, TlExtrude, TlSketch, TlExtrude, TlSketch, TlExtrude,
  TlFillet, TlFillet, TlFillet, TlFillet, TlFillet, TlFillet, TlSketch,
  TlExtrude, TlSketch, TlExtrude, TlCombine, TlSketch, TlExtrude, TlChamfer, TlChamfer, TlFillet, TlLink, TlOrange,
  TlMove, TlMove, TlMove, TlAlign, TlMove, TlMove, TlMove, TlMove, TlMove, TlSketch,
]

const Transport = () => (
  <div className="flex h-[37px] w-[142px] shrink-0 items-start pl-[11px] pt-[8px]">
    <svg width="112" height="14" viewBox="0 0 112 14" className="fill-[#4a4a4a]">
      <rect x="0" y="0" width="1.6" height="14" /><path d="M12 0 V14 L2 7Z" />
      <path d="M35 0 V14 L25 7Z" /><rect x="35.5" y="4" width="2" height="6" />
      <path d="M50 0 L62 7 L50 14Z" />
      <path d="M77 0 V14 L87 7Z" /><rect x="74" y="4" width="2" height="6" />
      <path d="M100 0 L110 7 L100 14Z" /><rect x="110.4" y="0" width="1.6" height="14" />
    </svg>
  </div>
)

const Timeline = () => (
  <div className="relative h-[40px] shrink-0 overflow-hidden bg-[#c8c8c8]">
    <div className="flex">
      <Transport />
      <div className="flex pt-[8px]">
        {tl.map((Ic, i) => (
          <div key={i} className="flex w-[24px] shrink-0 flex-col items-center">
            <div className={i > 19 ? 'h-[17px] opacity-35' : 'h-[17px]'}><Ic /></div>
            <div className="mt-[4px] h-[4px] w-[1px] bg-[#666]" />
          </div>
        ))}
      </div>
    </div>
    <div className="absolute left-[154px] right-0 top-[33px] h-[2px] bg-[#666]" />
    <div className="absolute left-[616px] top-[3px] flex flex-col items-center">
      <svg width="12" height="9" viewBox="0 0 12 9" className="fill-[#555]"><path d="M0 0 H12 V4 L6 9 L0 4Z" /></svg>
      <div className="h-[24px] w-[2px] bg-[#555]" />
    </div>
  </div>
)

const App = () => {
  return (
    <div className="flex h-[800px] w-[1121px] flex-col overflow-hidden bg-[#d9d9d9]" style={ui}>
      <TopBar />
      <TabBar />
      <div className="relative flex-1 overflow-hidden">
        <Viewport />
        <Toolbar />
        <Browser />
        <Comments />
        <NavBar />
      </div>
      <div className="box-content h-[8px] shrink-0 border-t-2 border-[#c9c9c9] bg-[#d9d9d9]">
        <div className="ml-[4px] h-[7px] w-[278px] rounded-full bg-[#909090]" />
      </div>
      <Timeline />
    </div>
  )
}

export default App
